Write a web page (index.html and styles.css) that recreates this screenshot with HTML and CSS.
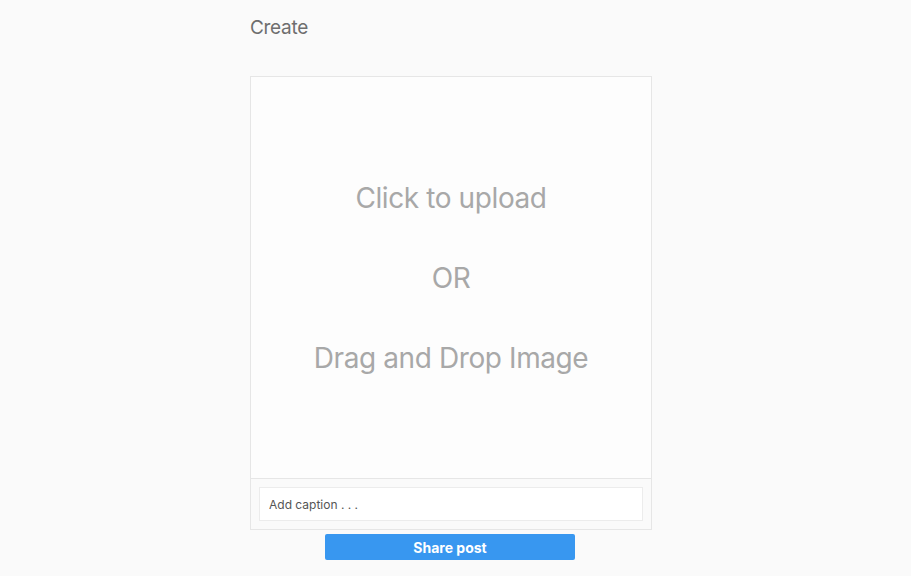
FILE: index.html
```html
<!DOCTYPE html>
<html>
<head>
<meta charset="utf-8">
<link rel="stylesheet" href="styles.css">
</head>
<body>
<main class="page">
  <h1 class="title">Create</h1>
  <section class="card">
    <div class="drop">
      <p class="drop-line">Click to upload</p>
      <p class="drop-line">OR</p>
      <p class="drop-line">Drag and Drop Image</p>
    </div>
    <div class="caption-row">
      <input class="caption" type="text" placeholder="Add caption . . .">
    </div>
  </section>
  <button class="share">Share post</button>
</main>
</body>
</html>
```

FILE: styles.css
```css
html, body {
  margin: 0;
  padding: 0;
  background: #fafafa;
  font-family: Inter, "Noto Sans", sans-serif;
}
body {
  padding-right: 9px;
}
.page {
  width: 402px;
  margin: 0 auto;
  padding-top: 16px;
  display: flex;
  flex-direction: column;
  align-items: flex-start;
}
.title {
  margin: 0;
  font-size: 19px;
  font-weight: 400;
  color: #6e6e6e;
  line-height: 24px;
  height: 60px;
  letter-spacing: -0.3px;
}
.card {
  width: 400px;
  border: 1px solid #e6e6e6;
  background: #fdfdfd;
}
.drop {
  height: 401px;
  display: flex;
  flex-direction: column;
  align-items: center;
  justify-content: center;
  gap: 46px;
}
.drop-line {
  margin: 0;
  font-size: 28px;
  line-height: 34px;
  color: #a8a8a8;
  letter-spacing: -0.4px;
}
.caption-row {
  border-top: 1px solid #e6e6e6;
  padding: 8px;
  background: #fafafa;
}
.caption {
  box-sizing: border-box;
  width: 100%;
  height: 34px;
  border: 1px solid #ececec;
  background: #fff;
  padding: 0 9px;
  font-family: Inter, sans-serif;
  font-size: 12px;
  color: #444;
  outline: none;
}
.caption::placeholder {
  color: #555;
}
.share {
  margin-top: 4px;
  margin-left: 75px;
  width: 250px;
  height: 26px;
  border: none;
  border-radius: 2px;
  background: #3897f0;
  color: #fff;
  font-family: Inter, sans-serif;
  font-weight: 700;
  font-size: 14px;
  padding: 0;
}
```
